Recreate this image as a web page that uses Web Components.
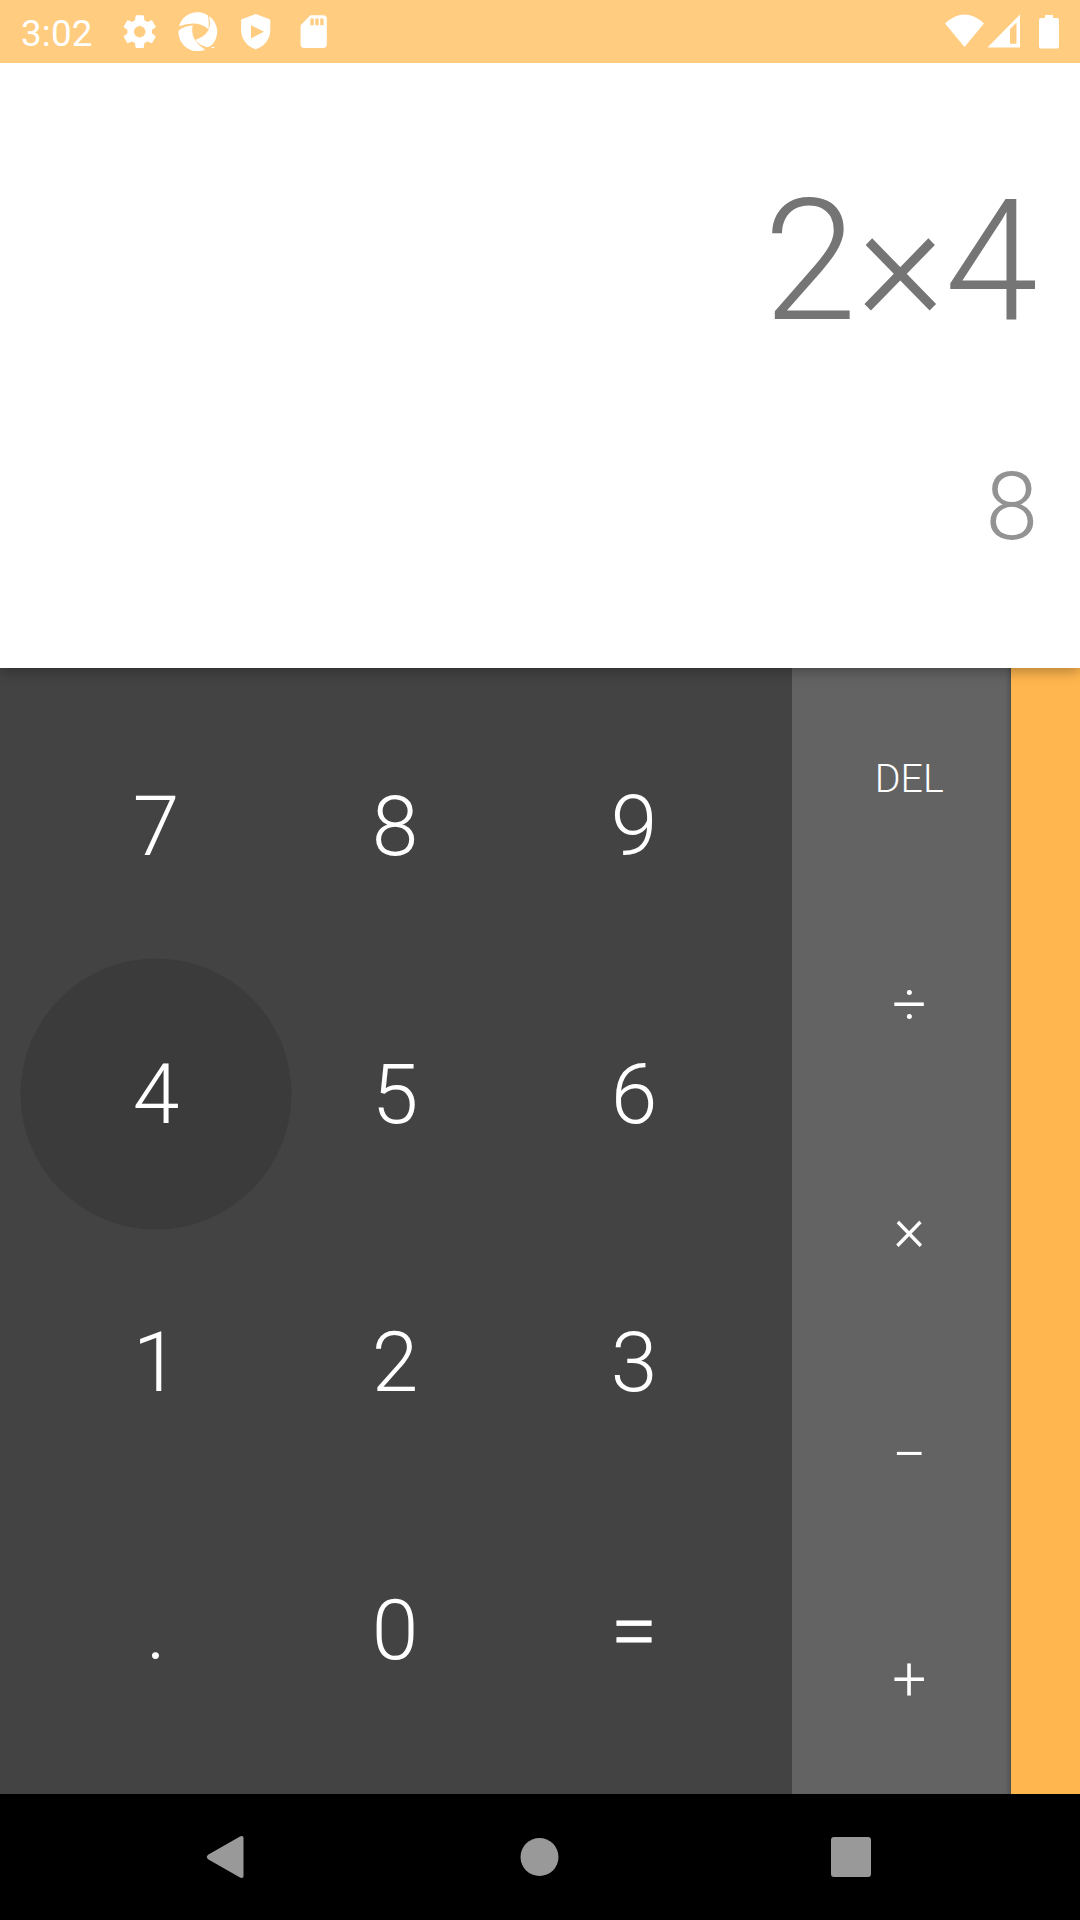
<!DOCTYPE html>
<html lang="en">
<head>
<meta charset="utf-8">
<title>Calculator</title>
<style>
html,body{margin:0;height:100%}
body{font-family:Roboto,"Liberation Sans",sans-serif;background:#000;overflow:hidden}
</style>
</head>
<body>
<calc-app></calc-app>
<script>
const define = (name, html) => {
  const t = document.createElement('template');
  t.innerHTML = html;
  customElements.define(name, class extends HTMLElement {
    constructor() {
      super();
      this.attachShadow({mode: 'open'}).append(t.content.cloneNode(true));
    }
  });
};

define('status-bar', `
<style>
:host{display:flex;box-sizing:border-box;height:63px;background:#ffcc80;color:#fff;align-items:center;justify-content:space-between;padding:0 20px 0 21px;position:relative;z-index:3}
.left{display:flex;align-items:center}
.time{font-size:36.75px;line-height:43px;width:99.3px;padding-top:3px;letter-spacing:.2px}
.icons{display:flex;gap:18.6px}
.icons svg{width:39.4px;height:39.4px}
svg{display:block;fill:#fff}
</style>
<div class="left">
  <span class="time">3:02</span>
  <div class="icons">
  <svg viewBox="0 0 24 24"><path d="M19.43 12.98c.04-.32.07-.64.07-.98s-.03-.66-.07-.98l2.11-1.65c.19-.15.24-.42.12-.64l-2-3.46c-.12-.22-.39-.3-.61-.22l-2.49 1c-.52-.4-1.08-.73-1.69-.98l-.38-2.65A.488.488 0 0 0 14 2h-4c-.25 0-.46.18-.49.42l-.38 2.65c-.61.25-1.17.59-1.69.98l-2.49-1c-.23-.09-.49 0-.61.22l-2 3.46c-.13.22-.07.49.12.64l2.11 1.65c-.04.32-.07.65-.07.98s.03.66.07.98l-2.11 1.65c-.19.15-.24.42-.12.64l2 3.46c.12.22.39.3.61.22l2.49-1c.52.4 1.08.73 1.69.98l.38 2.65c.03.24.24.42.49.42h4c.25 0 .46-.18.49-.42l.38-2.65c.61-.25 1.17-.59 1.69-.98l2.49 1c.23.09.49 0 .61-.22l2-3.46c.12-.22.07-.49-.12-.64l-2.11-1.65zM12 15.500a3.500 3.500 0 1 1 0-7 3.500 3.500 0 0 1 0 7z"/></svg>
  <svg viewBox="0 0 40 40">
   <path d="M1 14.500A19.500 19.500 0 0 1 30.300 3.200Q31.800 9 31 17.500Q20 7.500 1 14.500Z"/>
   <path d="M31.500 4A19.500 19.500 0 0 1 36 31.500Q33.500 35.500 29 35.700Q21 33.500 17.500 28.500Q31 24 32.300 14Q32.500 8 31.500 4Z"/>
   <path d="M.5 19Q5 14.500 15 13.800Q11.500 28 27.500 38.300A19.500 19.500 0 0 1 .5 19Z"/>
   <path d="M34 35.500h3v1h-3z"/>
  </svg>
  <svg viewBox="0 0 24 24"><path fill-rule="evenodd" d="M12 1.200L3.100 4.600v6.500c0 5.300 3.700 10 8.900 11.600 5.200-1.600 8.900-6.300 8.900-11.600V4.600zM9.100 8v8.100l7.900-4.050z"/></svg>
  <svg viewBox="0 0 24 24"><path d="M18 2h-8L4.020 8 4 20c0 1.100.900 2 2 2h12c1.100 0 2-.900 2-2V4c0-1.100-.900-2-2-2zm-6 6h-2V4h2v4zm3 0h-2V4h2v4zm3 0h-2V4h2v4z"/></svg>
  </div>
</div>
<svg width="116" height="36" viewBox="0 0 116 36">
  <path d="M1 9.500Q20.500-8.500 40 9.500L20.500 33Z"/>
  <path fill-rule="evenodd" d="M43.500 33.500L76 .5v33zM66 29.800h6.500V8.500L66 15z"/>
  <path d="M97 4h4V1h8v3h4q2 0 2 2v26.500q0 2-2 2H97q-2 0-2-2V6q0-2 2-2z"/>
</svg>`);

define('calc-display', `
<style>
:host{display:flex;flex-direction:column;box-sizing:border-box;height:605px;background:#fff;align-items:flex-end;padding:100px 42px 0 0;font-weight:300;position:relative;z-index:2;box-shadow:0 4px 12px rgba(0,0,0,.28)}
.formula{font-size:168px;line-height:197px;color:#757575}
.result{font-size:94.5px;line-height:111px;color:#939393;margin-top:91px}
</style>
<div class="formula"><slot name="formula"></slot></div>
<div class="result"><slot name="result"></slot></div>`);

define('calc-key', `
<style>
:host{display:flex;align-items:center;justify-content:center;color:#fff;font-weight:300;font-size:var(--key-size,84px);line-height:normal;position:relative}
:host([small]){font-size:39.375px;padding-bottom:3px}
:host([heavy]){-webkit-text-stroke:.8px #fff}
:host([pressed])::before{content:"";position:absolute;width:271px;height:271px;border-radius:50%;left:50%;top:50%;transform:translate(-50%,-50%);background:#3b3b3b}
span{position:relative;padding-top:var(--drop,0)}
</style>
<span><slot></slot></span>`);

define('number-pad', `
<style>
:host{display:grid;box-sizing:border-box;width:792px;background:#434343;padding:24px 38.400px 30px 36.600px;grid-template-columns:repeat(3,1fr);grid-template-rows:repeat(4,1fr);--drop:1px}
</style><slot></slot>`);

define('operator-pad', `
<style>
:host{display:grid;box-sizing:border-box;width:219px;background:#636363;padding:0 0 0 15.600px;grid-template-rows:224px repeat(4,225px);--key-size:60.375px;box-shadow:inset -5px 0 4px -3px rgba(0,0,0,.22)}
</style><slot></slot>`);

define('nav-bar', `
<style>
:host{display:flex;height:126px;background:#000;align-items:center;justify-content:space-between;padding:0 209px 0 206px}
svg{display:block;fill:#999}
</style>
<svg width="40" height="44" viewBox="0 0 40 44"><path d="M2.500 19.500L34 1.400Q37.500 0 37.500 3v38q0 3-3.500 1.600L2.500 24.500Q-1 22 2.500 19.500Z"/></svg>
<svg width="40" height="40" viewBox="0 0 40 40"><circle cx="20.500" cy="20" r="19"/></svg>
<svg width="40" height="40" viewBox="0 0 40 40"><rect width="40" height="40" rx="3"/></svg>`);

define('calc-app', `
<style>
:host{display:flex;flex-direction:column;width:1080px;height:1920px}
.pads{display:flex;height:1126px}
operator-pad{height:1126px}
.edge{flex:1;background:#ffb64e}
</style>
<status-bar></status-bar>
<calc-display><span slot="formula">2×4</span><span slot="result">8</span></calc-display>
<div class="pads">
  <number-pad>
    <calc-key>7</calc-key><calc-key>8</calc-key><calc-key>9</calc-key>
    <calc-key pressed>4</calc-key><calc-key>5</calc-key><calc-key>6</calc-key>
    <calc-key>1</calc-key><calc-key>2</calc-key><calc-key>3</calc-key>
    <calc-key>.</calc-key><calc-key>0</calc-key><calc-key heavy>=</calc-key>
  </number-pad>
  <operator-pad>
    <calc-key small>DEL</calc-key><calc-key>÷</calc-key><calc-key>×</calc-key><calc-key>−</calc-key><calc-key>+</calc-key>
  </operator-pad>
  <div class="edge"></div>
</div>
<nav-bar></nav-bar>`);
</script>
</body>
</html>
